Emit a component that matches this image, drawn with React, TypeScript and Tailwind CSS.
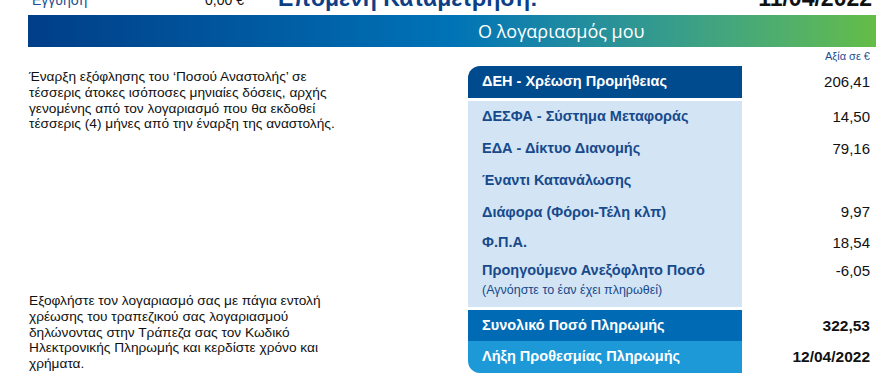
const rows = [
  { label: "ΔΕΣΦΑ - Σύστημα Μεταφοράς", value: "14,50", h: "h-[32px]" },
  { label: "ΕΔΑ - Δίκτυο Διανομής", value: "79,16", h: "h-[32px]" },
  { label: "Έναντι Κατανάλωσης", value: "", h: "h-[32px]" },
  { label: "Διάφορα (Φόροι-Τέλη κλπ)", value: "9,97", h: "h-[31px]" },
  { label: "Φ.Π.Α.", value: "18,54", h: "h-[30px]" },
];

const App = () => {
  return (
    <div
      className="w-[893px] h-[392px] overflow-hidden bg-white text-[#111]"
      style={{ fontFamily: '"Liberation Sans", Arial, sans-serif' }}
    >
      {/* top row, cut off by the viewport */}
      <div className="-mt-[15px] h-[26px] flex items-end pl-[32px] pr-[21px]">
        <span className="text-[14px] text-[#1b4f93] w-[173px]">Εγγύηση</span>
        <span className="text-[14px] w-[73px]">0,00 €</span>
        <span className="text-[23px] font-bold text-[#0d3f87] leading-[26px]">
          Επόμενη Καταμέτρηση:
        </span>
        <span className="ml-auto text-[23px] font-bold leading-[26px]">11/04/2022</span>
      </div>

      <div className="mx-[28px] mt-[4px] w-[848px] h-[32px] flex items-center bg-gradient-to-r from-[#003e88] via-[#0073b7] to-[#64bd45]">
        <span
          className="pl-[450px] text-white text-[18px] font-medium"
          style={{ fontFamily: '"Open Sans", sans-serif' }}
        >
          Ο λογαριασμός μου
        </span>
      </div>

      <div className="flex">
        <div className="w-[468px] pl-[29px] flex flex-col justify-between pt-[22px] pb-[1px] text-[13.7px] leading-[15.8px]">
          <p>
            Έναρξη εξόφλησης του ‘Ποσού Αναστολής’ σε
            <br />
            τέσσερις άτοκες ισόποσες μηνιαίες δόσεις, αρχής
            <br />
            γενομένης από τον λογαριασμό που θα εκδοθεί
            <br />
            τέσσερις (4) μήνες από την έναρξη της αναστολής.
          </p>
          <p>
            Εξοφλήστε τον λογαριασμό σας με πάγια εντολή
            <br />
            χρέωσης του τραπεζικού σας λογαριασμού
            <br />
            δηλώνοντας στην Τράπεζα σας τον Κωδικό
            <br />
            Ηλεκτρονικής Πληρωμής και κερδίστε χρόνο και
            <br />
            χρήματα.
          </p>
        </div>

        <div className="w-[402px] flex flex-col">
          <div className="h-[19px] flex items-center justify-end text-[11px] text-[#1b4f93]">
            Αξία σε €
          </div>
          <div className="flex h-[32px] items-center">
            <div className="w-[274px] h-full flex items-center pl-[14px] rounded-tl-[12px] bg-[#004a8e] text-white font-bold text-[14.5px]">
              ΔΕΗ - Χρέωση Προμήθειας
            </div>
            <div className="flex-1 text-right text-[15px]">206,41</div>
          </div>

          <div className="mt-[3px] flex flex-col">
            {rows.map((r) => (
              <div key={r.label} className={`flex items-center ${r.h}`}>
                <div className="w-[274px] h-full flex items-center pl-[14px] bg-[#d3e4f5] text-[#174a8b] font-bold text-[14.5px]">
                  {r.label}
                </div>
                <div className="flex-1 text-right text-[15px]">{r.value}</div>
              </div>
            ))}
            <div className="flex h-[49px]">
              <div className="w-[274px] h-full pl-[14px] pt-[4px] bg-[#d3e4f5] text-[#174a8b]">
                <div className="font-bold text-[14.5px] leading-[17px]">
                  Προηγούμενο Ανεξόφλητο Ποσό
                </div>
                <div className="text-[12.5px] leading-[18px] mt-[2px]">
                  (Αγνόηστε το έαν έχει πληρωθεί)
                </div>
              </div>
              <div className="flex-1 text-right text-[15px] pt-[4px] leading-[17px]">-6,05</div>
            </div>
          </div>

          <div className="mt-[3px] flex h-[31px] items-center">
            <div className="w-[274px] h-full flex items-center pl-[14px] bg-[#006bb4] text-white font-bold text-[14.5px]">
              Συνολικό Ποσό Πληρωμής
            </div>
            <div className="flex-1 text-right text-[15.5px] font-bold">322,53</div>
          </div>
          <div className="flex h-[32px] items-center">
            <div className="w-[274px] h-full flex items-center pl-[14px] rounded-bl-[12px] bg-[#1e99d7] text-white font-bold text-[14.5px]">
              Λήξη Προθεσμίας Πληρωμής
            </div>
            <div className="flex-1 text-right text-[15.5px] font-bold">12/04/2022</div>
          </div>
        </div>
      </div>
    </div>
  );
};

export default App;
